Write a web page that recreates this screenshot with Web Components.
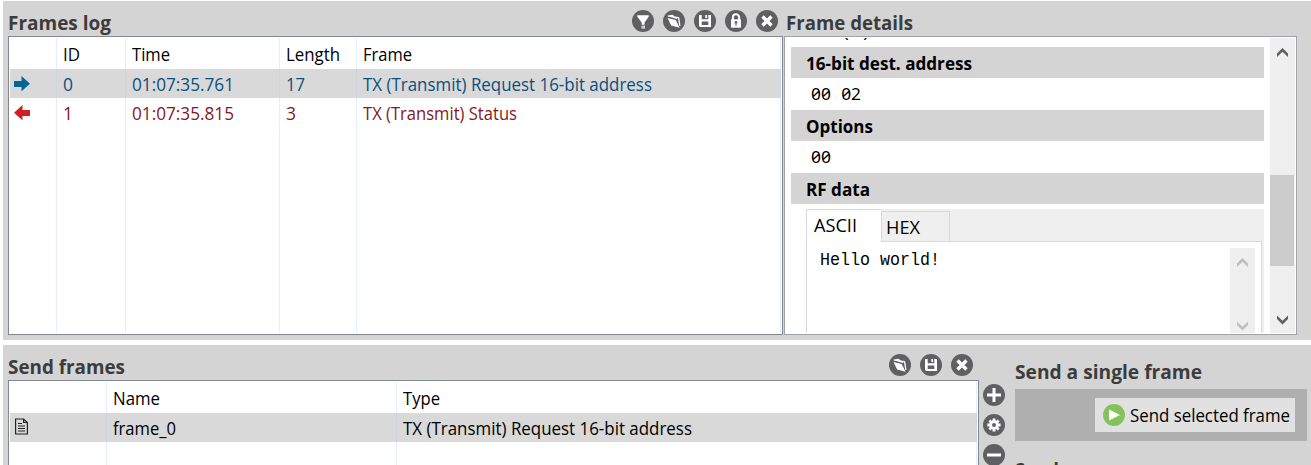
<!DOCTYPE html>
<html lang="en">
<head>
<meta charset="utf-8">
<title>Frames console</title>
<style>
html,body{margin:0;height:465px;overflow:hidden;background:#fff}
</style>
</head>
<body>
<frames-console></frames-console>
<script>
const attach=(el,html)=>{el.attachShadow({mode:'open'}).innerHTML=html;};

/* One line of text, condensed horizontally to the width in "w". */
class FitText extends HTMLElement{
  connectedCallback(){
    if(this.shadowRoot)return;
    attach(this,`<style>
      :host{display:block;height:24px;line-height:24px;font:18px/24px "Open Sans","Noto Sans",sans-serif;white-space:pre;flex:none}
      :host([bold]){font-weight:700;font-size:17.8px}
      :host([title]){font-weight:700;font-size:19px;color:#3c3c3c}
      :host([mono]){font-family:"Liberation Mono",monospace;font-size:17.5px}
      :host([digits]){font-family:"Noto Sans",sans-serif;font-size:16.5px;font-feature-settings:"zero" 1;word-spacing:5.5px}
      span{display:inline-block;transform-origin:0 50%}
    </style><span><slot></slot></span>`);
    const s=this.shadowRoot.querySelector('span'),w=+this.getAttribute('w');
    const n=s.getBoundingClientRect().width;
    this.style.width=w+'px';
    if(n)s.style.transform=`scaleX(${w/n})`;
  }
}
customElements.define('fit-text',FitText);

const GLYPHS={
  filter:'<path d="M5.3 5.2h11.4v1.6l-4.1 5.6v2.4H9.7v-2.4L5.3 6.8z" fill="#fff"/><path d="M9.6 15.7h3.2v2.8H9.6z" fill="#fff"/><path d="M10.4 16.5h1.3v1h-1.3z" fill="#606062"/>',
  open:'<path d="M4.5 8l8.2 2.1 3.9 7.7-8.4-2.2z" fill="#fff"/><path d="M4.8 6.2l4.6-.7 1.6 1.3 4.6 1 1.3 8" fill="none" stroke="#fff" stroke-width="1.3"/><path d="M5 6.2l4.4-.5 1.6 1.1 3 .9-.3 1.3z" fill="#fff"/>',
  save:'<path d="M5 5h12v12H6l-1-1z" fill="#fff"/><path d="M7.7 5h6.6v4.3H7.7zM7.7 11.5h6.6V15H7.7z" fill="#606062"/><path d="M11.3 5h1.8v3.1h-1.8z" fill="#fff"/>',
  lock:'<path d="M7.9 10V7.3a3.1 3.1 0 0 1 6.2 0V10" fill="none" stroke="#fff" stroke-width="2"/><path d="M6 9.3h10v8.4H6z" fill="#fff"/><circle cx="11" cy="12.3" r="1.3" fill="#606062"/><path d="M10.4 12.5h1.2v3h-1.2z" fill="#606062"/>',
  close:'<path d="M6.5 6.5l9 9m0-9l-9 9" stroke="#fff" stroke-width="3.4"/>',
  plus:'<path d="M11 4v14M4 11h14" stroke="#fff" stroke-width="3"/>',
  minus:'<path d="M4 11h14" stroke="#fff" stroke-width="3"/>',
  gear:'<g stroke="#fff" stroke-width="2.8"><path d="M11 4.4v13.2M4.4 11h13.2M6.4 6.4l9.2 9.2m0-9.2l-9.2 9.2"/></g><circle cx="11" cy="11" r="4.7" fill="#fff"/><circle cx="11" cy="11" r="2" fill="#606062"/>',
  play:'<path d="M6 5.6v11l11-5.5z" fill="#fff"/>'
};
class RoundIcon extends HTMLElement{
  connectedCallback(){
    if(this.shadowRoot)return;
    const k=this.getAttribute('kind');
    attach(this,`<style>:host{display:block;width:22px;height:22px;flex:none}svg{display:block}</style>
      <svg width="22" height="22" viewBox="0 0 22 22"><circle cx="11" cy="11" r="11" fill="${k==='play'?'#84c25d':'#606062'}"/>${GLYPHS[k]}</svg>`);
  }
}
customElements.define('round-icon',RoundIcon);

const ROWICONS={
  out:'<svg width="16" height="16"><path d="M0 5h7.5V0L16 7.7l-8.500 7.6V11H0z" fill="#006798"/></svg>',
  in:'<svg width="16" height="16"><path d="M16 5H8.500V0L0 7.7l8.500 7.6V11H16z" fill="#ce2020"/></svg>',
  doc:'<svg width="14" height="17" fill="none" stroke="#222"><path d="M.6 1h8L12.400 4.500v11.500H.6zM8.600 1v3.500h3.800" stroke-width="1.2"/><path d="M3 5.500h4M3 8h7M3 10.500h7M3 13h7"/></svg>'
};
/* Column widths come from --cols, shared by the rows and the grid lines. */
class GridRow extends HTMLElement{
  connectedCallback(){
    if(this.shadowRoot)return;
    const k=this.getAttribute('icon');
    attach(this,`<style>
      :host{display:grid;grid-template-columns:var(--cols);height:29px;box-sizing:border-box;padding-top:3px;color:#000;overflow:hidden}
      :host([head]){height:31px;padding-top:4px}
      :host([selected]){background:#d9d9d9}
      i{display:block;padding:var(--ip,3px 0 0 4px)}
      svg{display:block}
    </style><i>${k?ROWICONS[k]:''}</i><slot></slot>`);
  }
}
customElements.define('grid-row',GridRow);

class GridTable extends HTMLElement{
  connectedCallback(){
    if(this.shadowRoot)return;
    const n=+this.getAttribute('lines');
    attach(this,`<style>
      :host{display:block;box-sizing:border-box;position:relative;background:#fff;border:1px solid #828790;padding:1px 1px 0}
      .lines{position:absolute;inset:1px;display:grid;grid-template-columns:var(--cols);pointer-events:none;overflow:hidden}
      .lines b{border-right:1px solid rgba(175,210,245,.35);margin-right:6px}
    </style><slot></slot><div class="lines">${'<b></b>'.repeat(n)}</div>`);
  }
}
customElements.define('grid-table',GridTable);

class ScrollBar extends HTMLElement{
  connectedCallback(){
    if(this.shadowRoot)return;
    const c=this.getAttribute('color');
    attach(this,`<style>
      :host{display:flex;flex-direction:column;justify-content:space-between;width:25px;background:#efefef;box-sizing:border-box}
      svg{display:block;margin-left:7px}
      div{height:91px;width:24px;background:#cbcbcb;margin-top:68px}
    </style><svg width="11" height="10"><path d="M0 9V5.5L5.5 0 11 5.5V9L5.5 3.7z" fill="${c}"/></svg>
    ${this.hasAttribute('thumb')?'<div></div>':''}
    <svg width="11" height="10"><path d="M0 .5V4l5.500 5.500L11 4V.5L5.500 5.800z" fill="${c}"/></svg>`);
  }
}
customElements.define('scroll-bar',ScrollBar);

class FramesLog extends HTMLElement{
  connectedCallback(){
    if(this.shadowRoot)return;
    attach(this,`<style>
      :host{display:block;width:775px;margin-left:5px}
      header{display:flex;height:35px;padding-top:9px;box-sizing:border-box}
      header fit-text{margin-top:1px}
      nav{display:flex;gap:9px;margin:0 5px 0 auto}
      grid-table{height:299px;--cols:53px 69px 154px 77px 424px}
      .o{color:#0c4f7e}.i{color:#85181d}
      grid-row{--ip:4px 0 0 4px}
    </style>
    <header><fit-text title w="103">Frames log</fit-text><nav>${['filter','open','save','lock','close'].map(k=>`<round-icon kind="${k}"></round-icon>`).join('')}</nav></header>
    <grid-table lines="5">
      <grid-row head><fit-text w="17">ID</fit-text><fit-text w="38">Time</fit-text><fit-text w="54">Length</fit-text><fit-text w="49">Frame</fit-text></grid-row>
      <grid-row selected icon="out"><fit-text class="o" w="10">0</fit-text><fit-text class="o" w="102">01:07:35.761</fit-text><fit-text class="o" w="19">17</fit-text><fit-text class="o" w="289">TX (Transmit) Request 16-bit address</fit-text></grid-row>
      <grid-row icon="in"><fit-text class="i" w="10">1</fit-text><fit-text class="i" w="102">01:07:35.815</fit-text><fit-text class="i" w="10">3</fit-text><fit-text class="i" w="154">TX (Transmit) Status</fit-text></grid-row>
    </grid-table>`);
  }
}
customElements.define('frames-log',FramesLog);

class TabBox extends HTMLElement{
  connectedCallback(){
    if(this.shadowRoot)return;
    attach(this,`<style>
      :host{display:block;width:458px;background:#efefef;height:124px;overflow:hidden}
      .tabs{display:flex;height:32px;align-items:flex-end}
      .a{width:75px;height:32px;background:#fff;border:1px solid #d9d9d9;border-bottom:0;border-right:0;box-sizing:border-box;padding:3px 0 0 7px}
      .h{width:69px;height:30px;border:1px solid #d9d9d9;border-bottom:0;box-sizing:border-box;padding:3px 0 0 4px}
      .body{display:flex;justify-content:space-between;width:456px;height:92px;box-sizing:border-box;background:linear-gradient(#d9d9d9,#d9d9d9) 74px 0/400px 1px no-repeat #fff;border:solid #d9d9d9;border-width:0 1px;padding:7px 6px 0 13px}
      scroll-bar{height:85px;padding:10px 0 2px}
    </style>
    <div class="tabs"><div class="a"><fit-text w="43">ASCII</fit-text></div><div class="h"><fit-text w="34">HEX</fit-text></div></div>
    <div class="body"><fit-text mono w="120">Hello world!</fit-text><scroll-bar color="#bfbfbf"></scroll-bar></div>`);
  }
}
customElements.define('tab-box',TabBox);

class FrameDetails extends HTMLElement{
  connectedCallback(){
    if(this.shadowRoot)return;
    attach(this,`<style>
      :host{display:block;width:513px;margin-left:1px}
      header{height:35px;padding:10px 0 0 2px;box-sizing:border-box}
      .box{height:299px;box-sizing:border-box;border:1px solid #a0a3ac;background:#fff;display:flex;padding:1px 1px 1px 6px;overflow:hidden}
      .list{width:473px;height:295px;overflow:hidden;margin-right:6px}
      h3{margin:0;height:31px;background:#d4d4d4;box-sizing:border-box;padding:4px 0 0 15px;color:#000;font-size:0}
      .v{height:32px;box-sizing:border-box;padding:4px 0 0 20px;color:#000}
      .top{height:9px}.top fit-text{margin-top:-23px}
      tab-box{margin:5px 0 0 15px}
      scroll-bar{height:295px;padding:10px 0 8px}
    </style>
    <header><fit-text title w="127">Frame details</fit-text></header>
    <div class="box"><div class="list">
      <div class="v top"><fit-text mono w="60">00 (0)</fit-text></div>
      <h3><fit-text bold w="166">16-bit dest. address</fit-text></h3>
      <div class="v"><fit-text digits w="50">00 02</fit-text></div>
      <h3><fit-text bold w="67">Options</fit-text></h3>
      <div class="v"><fit-text digits w="20">00</fit-text></div>
      <h3><fit-text bold w="64">RF data</fit-text></h3>
      <tab-box></tab-box>
    </div><scroll-bar thumb color="#606060"></scroll-bar></div>`);
  }
}
customElements.define('frame-details',FrameDetails);

class SendFrames extends HTMLElement{
  connectedCallback(){
    if(this.shadowRoot)return;
    attach(this,`<style>
      :host{display:flex;margin-left:5px;width:997px}
      section{width:971px}
      header{display:flex;height:35px;padding-top:9px;box-sizing:border-box}
      header fit-text{margin-top:1px}
      nav{display:flex;gap:9px;margin:0 6px 0 auto}
      grid-table{height:100px;--cols:103px 290px 580px}
      grid-row{--ip:2px 0 0 5px}
      aside{display:flex;flex-direction:column;gap:8px;margin:39px 0 0 4px}
    </style>
    <section><header><fit-text title w="117">Send frames</fit-text><nav>${['open','save','close'].map(k=>`<round-icon kind="${k}"></round-icon>`).join('')}</nav></header>
    <grid-table lines="3">
      <grid-row head><fit-text w="47">Name</fit-text><fit-text w="37">Type</fit-text></grid-row>
      <grid-row selected icon="doc"><fit-text w="63">frame_0</fit-text><fit-text w="289">TX (Transmit) Request 16-bit address</fit-text></grid-row>
    </grid-table></section>
    <aside><round-icon kind="plus"></round-icon><round-icon kind="gear"></round-icon><round-icon kind="minus"></round-icon></aside>`);
  }
}
customElements.define('send-frames',SendFrames);

class SendSingle extends HTMLElement{
  connectedCallback(){
    if(this.shadowRoot)return;
    attach(this,`<style>
      :host{display:block;margin-left:10px;width:292px;padding-top:15px}
      .bar{height:52px;margin-top:5px;background:#afafaf;display:flex;justify-content:flex-end;align-items:center;padding-right:12px;box-sizing:border-box}
      button{all:unset;box-sizing:border-box;width:200px;height:34px;background:#e1e1e1;display:flex;align-items:center;padding-left:8px;gap:5px;color:#000}
      .next{margin-top:17px}
    </style>
    <fit-text title w="187">Send a single frame</fit-text>
    <div class="bar"><button><round-icon kind="play"></round-icon><fit-text w="160">Send selected frame</fit-text></button></div>
    <fit-text class="next" title w="134">Send sequence</fit-text>`);
  }
}
customElements.define('send-single',SendSingle);

class FramesConsole extends HTMLElement{
  connectedCallback(){
    attach(this,`<style>
      :host{display:block;padding:1px 0 0 3px;height:465px;box-sizing:border-box;overflow:hidden}
      div{display:flex;background:#d4d4d4;height:339px}
      div+div{margin-top:5px;height:130px}
    </style>
    <div><frames-log></frames-log><frame-details></frame-details></div>
    <div><send-frames></send-frames><send-single></send-single></div>`);
  }
}
customElements.define('frames-console',FramesConsole);
</script>
</body>
</html>
